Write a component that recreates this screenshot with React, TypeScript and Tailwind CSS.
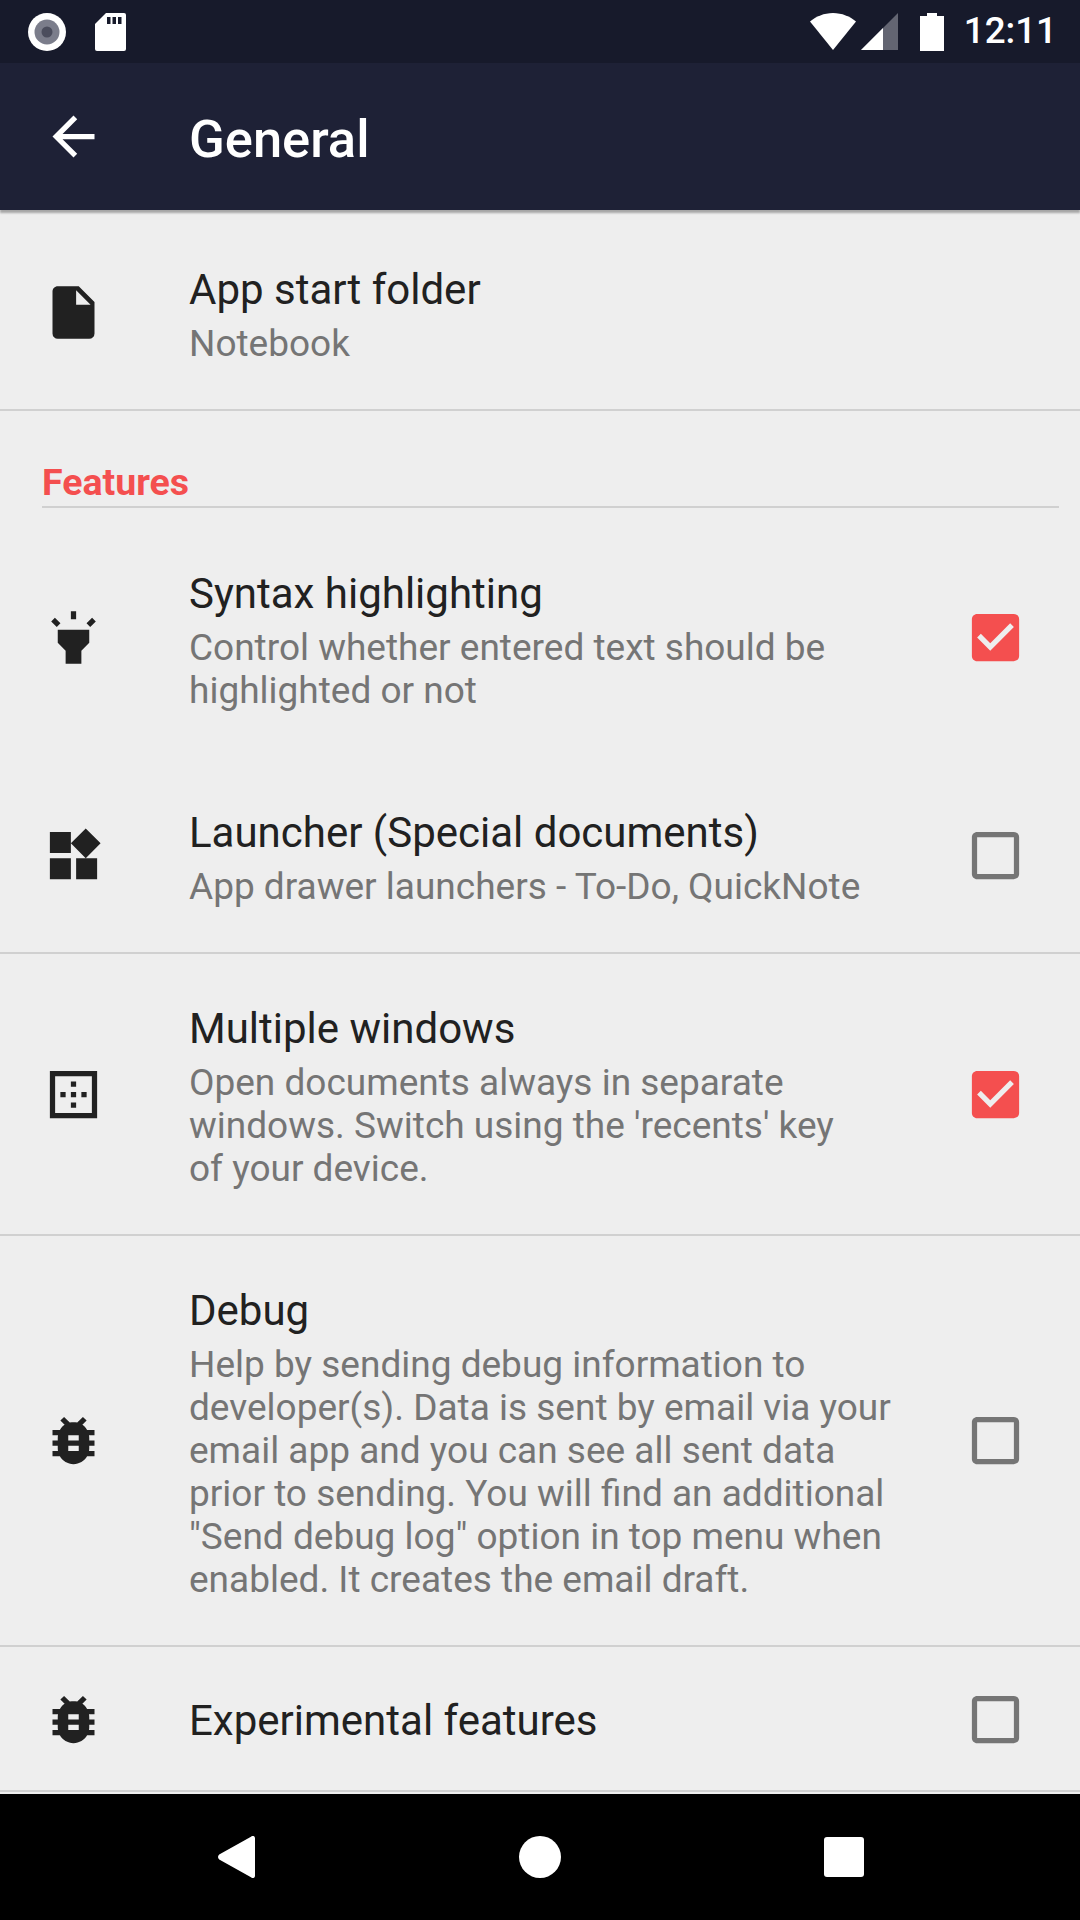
import React from 'react';

// material icon paths, 24dp box drawn at 63px
const icons = {
  file: "M13 9V3.5L18.5 9M6 2c-1.11 0-2 .89-2 2v16a2 2 0 0 0 2 2h12a2 2 0 0 0 2-2V8l-6-6H6z",
  highlight: "M6 14l3 3v5h6v-5l3-3V9H6zm5-12h2v3h-2zM3.5 5.875L4.914 4.46l2.12 2.122L5.62 7.997zm13.46.71l2.123-2.12 1.414 1.414L18.375 8z",
  widgets: "M13 13v8h8v-8h-8zM3 21h8v-8H3v8zM3 3v8h8V3H3zm13.66-1.31L11 7.34 16.66 13l5.66-5.66-5.66-5.65z",
  windows: "M13 7h-2v2h2V7zm0 4h-2v2h2v-2zm4 0h-2v2h2v-2zM3 3v18h18V3H3zm16 16H5V5h14v14zm-6-4h-2v2h2v-2zm-4-4H7v2h2v-2z",
  bug: "M20 8h-2.81c-.45-.78-1.07-1.45-1.82-1.96L17 4.41 15.59 3l-2.17 2.17C12.96 5.06 12.49 5 12 5c-.49 0-.96.06-1.41.17L8.41 3 7 4.41l1.62 1.63C7.88 6.55 7.26 7.22 6.81 8H4v2h2.09c-.05.33-.09.66-.09 1v1H4v2h2v1c0 .34.04.67.09 1H4v2h2.81c1.04 1.79 2.97 3 5.19 3s4.15-1.21 5.19-3H20v-2h-2.09c.05-.33.09-.66.09-1v-1h2v-2h-2v-1c0-.34-.04-.67-.09-1H20V8zm-6 8h-4v-2h4v2zm0-4h-4v-2h4v2z",
};

const Icon = ({ d, className }: { d: string; className: string }) => (
  <svg viewBox="0 0 24 24" className={className} fill="currentColor">
    <path d={d} />
  </svg>
);

const Checkbox = ({ checked }: { checked?: boolean }) =>
  checked ? (
    <Icon
      className="w-[63px] h-[63px] mb-[2px] shrink-0 text-[#f44f4f]"
      d="M19 3H5c-1.11 0-2 .9-2 2v14c0 1.1.89 2 2 2h14c1.11 0 2-.9 2-2V5c0-1.1-.89-2-2-2zm-9 14l-5-5 1.41-1.41L10 14.17l7.59-7.59L19 8l-9 9z"
    />
  ) : (
    <Icon
      className="w-[63px] h-[63px] mb-[2px] shrink-0 text-[#757575]"
      d="M19 5v14H5V5h14m0-2H5c-1.1 0-2 .9-2 2v14c0 1.1.9 2 2 2h14c1.1 0 2-.9 2-2V5c0-1.1-.9-2-2-2z"
    />
  );

type RowProps = {
  icon: string;
  title: string;
  sub?: React.ReactNode;
  checkbox?: boolean;
  checked?: boolean;
  className: string;
};

const Row = ({ icon, title, sub, checkbox, checked, className }: RowProps) => (
  <div className={`flex items-center pl-[42px] pr-[53px] border-b-2 ${className}`}>
    <Icon d={icon} className="w-[63px] h-[63px] mb-[2px] shrink-0 text-[#212121]" />
    <div className="flex-1 ml-[84px] pr-[20px]">
      <div className="text-[42px] leading-[58px] text-[#212121]">{title}</div>
      {sub && <div className="mt-[3px] text-[37px] leading-[43px] text-[#757575]">{sub}</div>}
    </div>
    {checkbox && <Checkbox checked={checked} />}
  </div>
);

const StatusBar = () => (
  <div className="flex items-center h-[63px] pl-[28px] pr-[23px] bg-[#171a2b] text-white shrink-0">
    <svg viewBox="0 0 38 38" className="w-[38px] h-[38px]">
      <circle cx="19" cy="19" r="19" fill="#fff" />
      <circle cx="19" cy="19" r="12.5" fill="#7b7d8b" />
      <circle cx="19" cy="19" r="5.5" fill="#4b4d5d" />
    </svg>
    <svg viewBox="0 0 31 38" className="w-[31px] h-[38px] ml-[29px]">
      <path d="M11 0h18a2 2 0 0 1 2 2v34a2 2 0 0 1-2 2H2a2 2 0 0 1-2-2V11z" fill="#fff" />
      <path d="M12 4h3.5v7H12zM17.5 4H21v7h-3.5zM23 4h3.5v7H23z" fill="#171a2b" />
    </svg>
    <svg viewBox="0 0 46 38" className="w-[46px] h-[38px] ml-auto">
      <path d="M0 8.5C6 3.5 14 0 23 0s17 3.500 23 8.500L23 37z" fill="#fff" />
    </svg>
    <svg viewBox="0 0 37 38" className="w-[37px] h-[38px] ml-[5px]">
      <path d="M37 0v37H0z" fill="#636572" />
      <path d="M22 15v22H0z" fill="#fff" />
    </svg>
    <svg viewBox="0 0 24 38" className="w-[24px] h-[38px] ml-[22px]">
      <path d="M7 0h10v3h7v35H0V3h7z" fill="#fff" />
    </svg>
    <span className="ml-[20px] text-[36.75px] leading-none font-medium">12:11</span>
  </div>
);

const Toolbar = () => (
  <div className="relative z-10 flex items-center h-[147px] bg-[#1e2136] text-white shrink-0 shadow-[0_3px_2px_rgba(0,0,0,0.3)]">
    <svg viewBox="0 0 24 24" className="w-[63px] h-[63px] ml-[42px]" fill="#fff">
      <path d="M20 11H7.83l5.59-5.59L12 4l-8 8 8 8 1.410-1.410L7.83 13H20v-2z" />
    </svg>
    <span className="ml-[84px] pt-[5px] text-[52.5px] font-medium leading-none">General</span>
  </div>
);

const NavBar = () => (
  <div className="flex items-center justify-center h-[126px] bg-black shrink-0">
    <div className="flex justify-center w-[304px]">
      <svg viewBox="0 0 37 42" className="w-[37px] h-[42px]" fill="#fff">
        <path d="M33 .8c1.500-1.700 4-.8 4 1.400v37.600c0 2.200-2.500 3.100-4 1.400L1.200 23.500c-1.600-1.500-1.600-3.500 0-5z" />
      </svg>
    </div>
    <div className="flex justify-center w-[304px]">
      <svg viewBox="0 0 42 42" className="w-[42px] h-[42px]" fill="#fff">
        <circle cx="21" cy="21" r="21" />
      </svg>
    </div>
    <div className="flex justify-center w-[304px]">
      <svg viewBox="0 0 40 40" className="w-[40px] h-[40px]" fill="#fff">
        <rect width="40" height="40" rx="3" />
      </svg>
    </div>
  </div>
);

export default function App() {
  return (
    <div className="flex flex-col w-[1080px] h-[1920px] overflow-hidden bg-[#eeeeee] font-['Roboto',sans-serif]">
      <StatusBar />
      <Toolbar />
      <div className="flex-1 overflow-hidden">
        <Row
          icon={icons.file}
          title="App start folder"
          sub="Notebook"
          className="pt-[51px] pb-[44px] border-[#d0d0d0]"
        />

        {/* Features */}
        <div className="ml-[42px] mr-[21px] mb-[12px] pt-[50px] pb-[2px] border-b-2 border-[#d0d0d0]">
          <div className="text-[37.5px] leading-[43px] font-bold text-[#f44f4f]">Features</div>
        </div>

        <Row
          icon={icons.highlight}
          title="Syntax highlighting"
          sub={<>Control whether entered text should be<br />highlighted or not</>}
          checkbox
          checked
          className="py-[45px] border-transparent"
        />
        <Row
          icon={icons.widgets}
          title="Launcher (Special documents)"
          sub="App drawer launchers - To-Do, QuickNote"
          checkbox
          className="pt-[45px] pb-[44px] border-[#d0d0d0]"
        />
        <Row
          icon={icons.windows}
          title="Multiple windows"
          sub={<>Open documents always in separate<br />windows. Switch using the 'recents' key<br />of your device.</>}
          checkbox
          checked
          className="pt-[46px] pb-[44px] border-[#d0d0d0]"
        />
        <Row
          icon={icons.bug}
          title="Debug"
          sub={<>Help by sending debug information to<br />developer(s). Data is sent by email via your<br />email app and you can see all sent data<br />prior to sending. You will find an additional<br />"Send debug log" option in top menu when<br />enabled. It creates the email draft.</>}
          checkbox
          className="pt-[46px] pb-[44px] border-[#d0d0d0]"
        />
        <Row
          icon={icons.bug}
          title="Experimental features"
          checkbox
          className="pt-[41px] pb-[37px] border-[#d0d0d0]"
        />
      </div>
      <NavBar />
    </div>
  );
}
